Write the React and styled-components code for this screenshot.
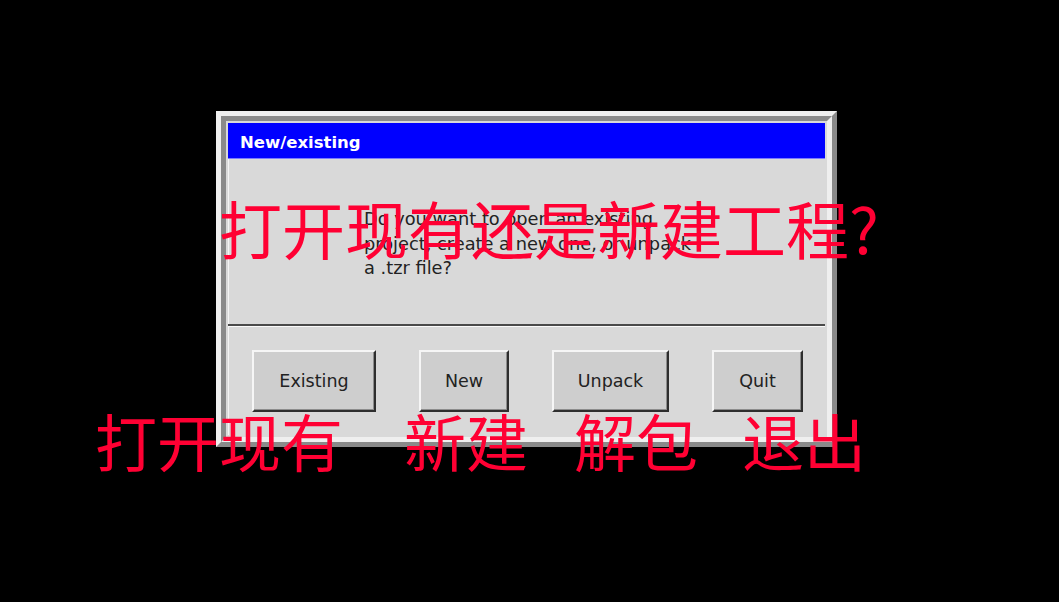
import React from 'react';
import styled, { createGlobalStyle } from 'styled-components';

const GlobalStyle = createGlobalStyle`
  html, body {
    margin: 0;
    padding: 0;
    background: #000;
  }
`;

// Page canvas, dialog placed by padding
const Page = styled.div`
  position: relative;
  width: 1059px;
  height: 602px;
  box-sizing: border-box;
  padding: 111px 0 0 216px;
  background: #000;
  overflow: hidden;
`;

const Window = styled.div`
  width: 621px;
  box-sizing: border-box;
  border: 5px solid;
  border-color: #efefef #8a8a8a #8a8a8a #efefef;
`;

const Inner = styled.div`
  border: 5px solid;
  border-color: #8a8a8a #efefef #efefef #8a8a8a;
  padding: 2px;
  background: #d9d9d9;
`;

const TitleBar = styled.div`
  height: 36px;
  box-sizing: border-box;
  display: flex;
  align-items: center;
  padding: 3px 0 0 12px;
  background: #0000ff;
  border-bottom: 1px solid #7b7bff;
  color: #fff;
  font-family: "DejaVu Sans", sans-serif;
  font-weight: bold;
  font-size: 16.5px;
`;

const Body = styled.div`
  height: 165px;
  box-sizing: border-box;
  padding: 48px 0 0 135px;
  border-left: 1px solid #f4f4f4;
  color: #222;
  font-family: "DejaVu Sans", sans-serif;
  font-size: 17.8px;
  line-height: 24.5px;
`;

const Divider = styled.div`
  height: 2px;
  background: #4a4a4a;
  border-bottom: 1px solid #fafafa;
`;

const ButtonRow = styled.div`
  height: 108px;
  display: flex;
  align-items: center;
  justify-content: space-between;
  padding: 0 22px 0 23px;
  border-left: 1px solid #f4f4f4;
`;

const Button = styled.button`
  width: ${(p) => p.$w}px;
  height: 62px;
  box-sizing: border-box;
  border: 2px solid;
  border-color: #f6f6f6 #2e2e2e #2e2e2e #f6f6f6;
  box-shadow: inset -1px -1px 0 #8c8c8c;
  background: #cecece;
  color: #222;
  font-family: "DejaVu Sans", sans-serif;
  font-size: 17.5px;
  padding: 0;
`;

// Red caption overlays drawn on top of the screenshot
const Caption = styled.div`
  position: absolute;
  left: ${(p) => p.$left}px;
  top: ${(p) => p.$top}px;
  display: flex;
  white-space: nowrap;
  color: #ff0033;
  font-family: "Noto Sans CJK SC", sans-serif;
  font-size: ${(p) => p.$size}px;
  line-height: 1;
`;

const Word = styled.span`
  margin-left: ${(p) => p.$gap || 0}px;
`;

const buttons = [
  { label: 'Existing', w: 124 },
  { label: 'New', w: 90 },
  { label: 'Unpack', w: 117 },
  { label: 'Quit', w: 91 },
];

export default function App() {
  return (
    <>
      <GlobalStyle />
      <Page>
        <Window>
          <Inner>
            <TitleBar>New/existing</TitleBar>
            <Body>
              Do you want to open an existing
              <br />
              project, create a new one, or unpack
              <br />
              a .tzr file?
            </Body>
            <Divider />
            <ButtonRow>
              {buttons.map((b) => (
                <Button key={b.label} $w={b.w}>
                  {b.label}
                </Button>
              ))}
            </ButtonRow>
          </Inner>
        </Window>

        <Caption $left={219} $top={195} $size={63}>
          打开现有还是新建工程?
        </Caption>
        <Caption $left={95} $top={409} $size={62}>
          <Word>打开现有</Word>
          <Word $gap={61}>新建</Word>
          <Word $gap={46}>解包</Word>
          <Word $gap={44}>退出</Word>
        </Caption>
      </Page>
    </>
  );
}
